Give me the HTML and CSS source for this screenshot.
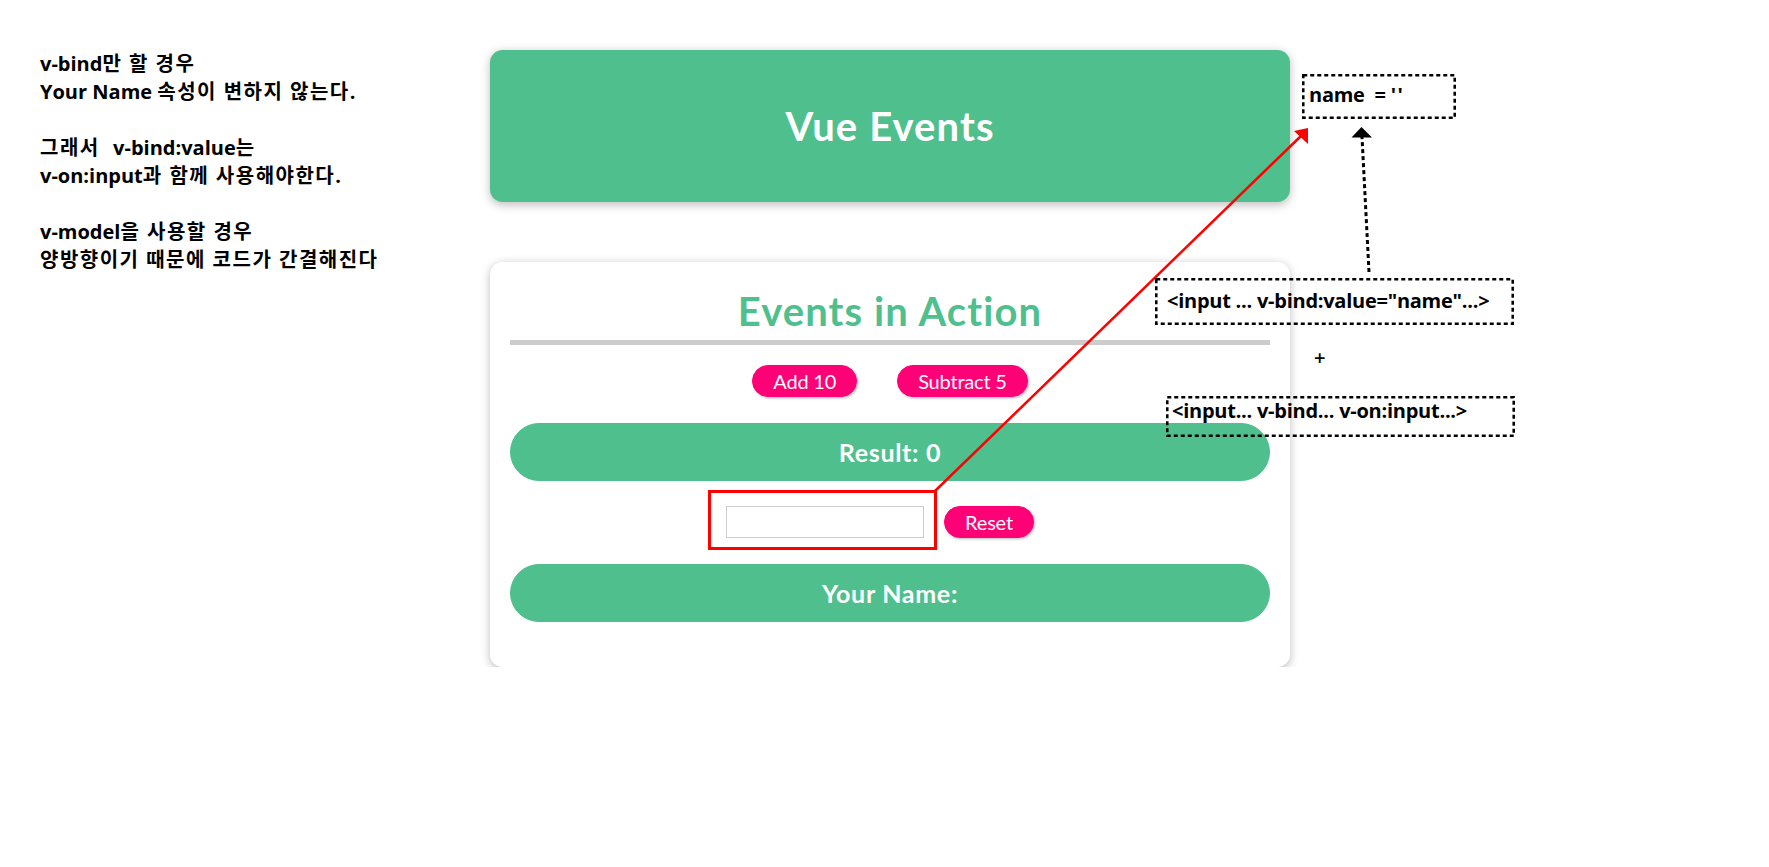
FILE: index.html
```html
<!DOCTYPE html>
<html lang="ko">
<head>
<meta charset="utf-8">
<title>Vue Events</title>
<link rel="stylesheet" href="styles.css">
</head>
<body>
<div class="page">
  <aside class="notes">
    <p>v-bind<span class="ko">만 할 경우</span><br>Your Name <span class="ko">속성이 변하지 않는다.</span></p>
    <p><span class="ko">그래서&nbsp; </span>v-bind:value<span class="ko">는</span><br>v-on:input<span class="ko">과 함께 사용해야한다.</span></p>
    <p>v-model<span class="ko">을 사용할 경우</span><br><span class="ko">양방향이기 때문에 코드가 간결해진다</span></p>
  </aside>
  <main class="app">
    <header class="app-header"><h1>Vue Events</h1></header>
    <section class="events">
      <h2>Events in Action</h2>
      <div class="row">
        <button class="btn" type="button">Add 10</button>
        <button class="btn" type="button">Subtract 5</button>
      </div>
      <p class="output">Result: 0</p>
      <div class="row">
        <input class="name-input" type="text">
        <button class="btn" type="button">Reset</button>
      </div>
      <p class="output">Your Name: </p>
    </section>
  </main>
</div>

<div class="annotations">
  <svg class="marks" width="1769" height="867" viewBox="0 0 1769 867">
    <rect x="709.5" y="491.5" width="226" height="57" fill="none" stroke="#ff0000" stroke-width="3"/>
    <line x1="935" y1="491" x2="1302" y2="135" stroke="#ff0000" stroke-width="2.5"/>
    <polygon points="1294,131 1308,128 1308,144" fill="#ff0000"/>
    <line x1="1369" y1="272" x2="1362" y2="137" stroke="#000" stroke-width="3" stroke-dasharray="4 3"/>
    <polygon points="1361.5,127 1351.5,137.5 1372,137.5" fill="#000"/>
  </svg>

  <div class="note note-name">
    <svg class="frame" width="154" height="45"><rect x="1.25" y="1.25" width="151.5" height="42.5"/></svg>
    <span>name&nbsp; = <span class="ticks">''</span></span>
  </div>
  <div class="note note-bind">
    <svg class="frame" width="359" height="47"><rect x="1.25" y="1.25" width="356.5" height="44.5"/></svg>
    <span>&lt;input ... v-bind:value="name"...&gt;</span>
  </div>
  <div class="note-plus">+</div>
  <div class="note note-on">
    <svg class="frame" width="349" height="41"><rect x="1.25" y="1.25" width="346.5" height="38.5"/></svg>
    <span>&lt;input... v-bind... v-on:input...&gt;</span>
  </div>
</div>
</body>
</html>
```

FILE: styles.css
```css
* {
  box-sizing: border-box;
}

html {
  font-family: "Lato", "Noto Sans", sans-serif;
}

body {
  margin: 0;
  background: #ffffff;
}

.page {
  display: flex;
  align-items: flex-start;
  padding-top: 50px;
}

/* left hand notes */
.notes {
  width: 490px;
  flex: none;
  padding-left: 40px;
  font: 700 20px/28px "Open Sans", "Noto Sans CJK KR", sans-serif;
  color: #000;
  white-space: nowrap;
}

.notes p {
  margin: 0 0 28px;
}

.notes .ko {
  letter-spacing: 1.5px;
}

/* app */
.app {
  width: 800px;
  flex: none;
}

.app-header {
  box-shadow: 0 2.5px 10px rgba(0, 0, 0, 0.26);
  margin: 0 0 60px;
  border-radius: 12.5px;
  padding: 20px;
  background-color: #4fc08d;
  color: #fff;
  text-align: center;
}

.app-header h1 {
  margin: 27px 0;
  font-size: 40px;
  line-height: 58px;
  font-weight: 700;
  letter-spacing: 1.1px;
}

.events {
  box-shadow: 0 2.5px 10px rgba(0, 0, 0, 0.26);
  border-radius: 12.5px;
  padding: 20px;
  text-align: center;
  background: #fff;
}

.events h2 {
  margin: 0 0 20px;
  font-size: 40px;
  line-height: 58px;
  font-weight: 700;
  color: #4fc08d;
  border-bottom: 5px solid #ccc;
  letter-spacing: 1.1px;
}

.row {
  display: flex;
  justify-content: center;
  align-items: flex-start;
  height: 33px;
}

.btn {
  font: inherit;
  font-size: 20px;
  line-height: 28px;
  height: 32px;
  cursor: pointer;
  border: 1px solid #ff0077;
  background-color: #ff0077;
  color: #fff;
  padding: 1px 20px;
  box-shadow: 1.25px 1.25px 2.5px rgba(0, 0, 0, 0.26);
  border-radius: 25px;
  margin: 0 20px;
  letter-spacing: -0.2px;
}

.name-input {
  font: inherit;
  font-size: 20px;
  width: 198px;
  height: 32px;
  padding: 1px 2px;
  border: 1px solid #ccc;
  margin: 0;
}

.output {
  margin: 25px 0;
  padding: 10px;
  font-size: 25px;
  line-height: 36px;
  font-weight: 700;
  letter-spacing: 0.7px;
  border: 1px solid #4fc08d;
  background-color: #4fc08d;
  color: #fff;
  border-radius: 31.25px;
}

/* annotation layer drawn over the screenshot */
.annotations {
  position: absolute;
  left: 0;
  top: 0;
  width: 1769px;
  height: 867px;
  pointer-events: none;
}

.marks {
  position: absolute;
  left: 0;
  top: 0;
}

.note {
  position: absolute;
  font: 700 20px/28px "Open Sans", "Noto Sans CJK KR", sans-serif;
  color: #000;
  white-space: nowrap;
  letter-spacing: -0.25px;
}

.note .frame {
  position: absolute;
  left: 0;
  top: 0;
}

.note .frame rect {
  fill: none;
  stroke: #000;
  stroke-width: 2.6;
  stroke-dasharray: 4 3;
}

.note span {
  position: relative;
}

.note .ticks {
  letter-spacing: 1.5px;
}

.note-name {
  left: 1302px;
  top: 74px;
  width: 154px;
  height: 45px;
  padding: 6.5px 0 0 7px;
}

.note-bind {
  left: 1155px;
  top: 278px;
  width: 359px;
  height: 47px;
  padding: 8.5px 0 0 12px;
}

.note-on {
  left: 1166px;
  top: 396px;
  width: 349px;
  height: 41px;
  padding: 2px 0 0 6px;
  line-height: 26px;
}

.note-plus {
  position: absolute;
  left: 1314px;
  top: 344px;
  font: 600 20px/28px "Open Sans", sans-serif;
  color: #000;
}
```
